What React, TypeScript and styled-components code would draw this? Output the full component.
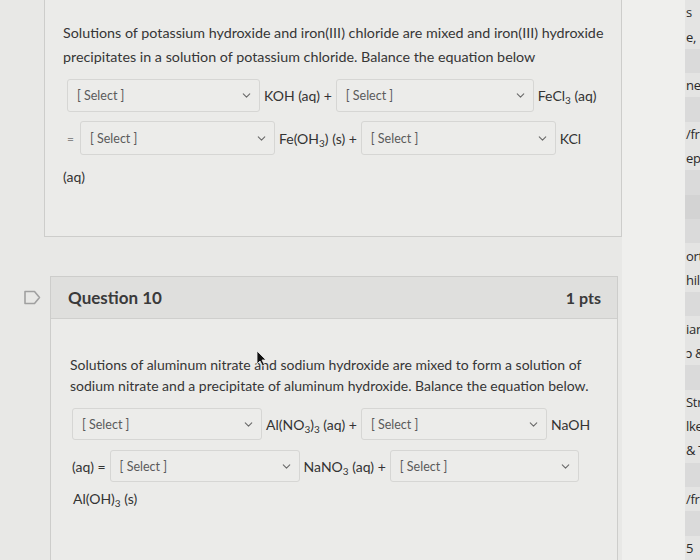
import React from "react";
import styled, { createGlobalStyle } from "styled-components";
import { ChevronDown } from "lucide-react";

const Global = createGlobalStyle`
  html, body { margin: 0; padding: 0; }
  body {
    background: #e8e8e6;
    font-family: Lato, "Noto Sans", "Liberation Sans", sans-serif;
    color: #383838;
    overflow: hidden;
  }
`;

const Page = styled.div`
  display: flex;
  width: 700px;
  height: 560px;
  overflow: hidden;
`;

const Main = styled.div`
  flex: 0 0 622px;
  display: flex;
  flex-direction: column;
  overflow: hidden;
`;

const Strip = styled.div`
  flex: 0 0 63px;
  background: #efefed;
`;

const Sidebar = styled.div`
  flex: 1;
  display: flex;
  flex-direction: column;
  background: #dedede;
  overflow: hidden;
`;

const SideItem = styled.div<{ $shade: number }>`
  height: 24.35px;
  flex: 0 0 24.35px;
  display: flex;
  align-items: center;
  padding-left: 1px;
  font-family: "Open Sans", Lato, sans-serif;
  font-size: 13px;
  letter-spacing: -0.3px;
  color: #2a2a2a;
  white-space: nowrap;
  background: ${(p) => (p.$shade === 0 ? "#e4e4e3" : p.$shade === 1 ? "#dadada" : "#d3d3d3")};
`;

const PrevCard = styled.div`
  flex: 0 0 237px;
  margin-left: 44px;
  width: 578px;
  box-sizing: border-box;
  border: 1px solid #cdcdcb;
  border-top: none;
  background: #ebebe9;
  padding: 21px 10px 0 18px;
`;

const Para = styled.p<{ $lh: number; $size: number }>`
  margin: 0;
  font-size: ${(p) => p.$size}px;
  line-height: ${(p) => p.$lh}px;
  color: #363636;
  white-space: nowrap;
`;

const EqRow = styled.div<{ $top: number; $indent: number }>`
  display: flex;
  align-items: center;
  gap: 4px;
  margin-top: ${(p) => p.$top}px;
  margin-left: ${(p) => p.$indent}px;
  font-size: 14px;
  color: #333;
  white-space: nowrap;
`;

const EqText = styled.span`
  font-size: 14px;
  color: #333;
  sub { font-size: 10px; vertical-align: -3px; line-height: 0; }
`;

const Equals = styled.span`
  font-size: 12px;
  color: #888;
  margin-right: 2px;
`;

const SelectBox = styled.div<{ $w: number; $h: number }>`
  box-sizing: border-box;
  width: ${(p) => p.$w}px;
  height: ${(p) => p.$h}px;
  display: flex;
  align-items: center;
  justify-content: space-between;
  padding: 0 6px 0 9px;
  background: #ececea;
  border: 1px solid #d6d6d4;
  border-radius: 3px;
  font-size: 12.5px;
  color: #5a5a5a;
  svg { color: #6a6a6a; }
`;

const Gap = styled.div<{ $h: number }>`
  flex: 0 0 ${(p) => p.$h}px;
`;

const QuestionBlock = styled.div`
  flex: 0 0 auto;
  display: flex;
`;

const FlagCol = styled.div`
  flex: 0 0 50px;
  box-sizing: border-box;
  padding: 13px 0 0 24px;
  color: #a0a0a0;
`;

const QCard = styled.div`
  flex: 0 0 568px;
  box-sizing: border-box;
  border: 1px solid #cdcdcb;
  background: #ebebe9;
  height: 300px;
`;

const QHeader = styled.div`
  height: 42px;
  box-sizing: border-box;
  display: flex;
  align-items: center;
  justify-content: space-between;
  padding: 0 16px 0 17px;
  background: #dfdfdd;
  border-bottom: 1px solid #cfcfcd;
  color: #3a3a3a;
`;

const QTitle = styled.h2`
  margin: 0;
  font-size: 17px;
  font-weight: 700;
`;

const Pts = styled.span`
  font-size: 16px;
  font-weight: 700;
`;

const QBody = styled.div`
  position: relative;
  padding: 36px 10px 0 19px;
`;

const Cursor = styled.svg`
  position: absolute;
  left: 205px;
  top: 31px;
`;

const Select = ({ w, h = 33 }: { w: number; h?: number }) => (
  <SelectBox $w={w} $h={h}>
    <span>[ Select ]</span>
    <ChevronDown size={13} strokeWidth={2} />
  </SelectBox>
);

const sideItems: [string, number][] = [
  ["s", 0], ["e,", 0], ["", 1], ["ne", 0], ["", 1], ["/fri", 0], ["eph", 0], ["", 1],
  ["", 2], ["", 1], ["ort", 0], ["hild", 0], ["", 1], ["ian", 0], ["\u0254 &", 0],
  ["", 1], ["Str", 0], ["lke", 0], ["& T", 0], ["", 1], ["/fri", 0], ["", 1], ["5", 0],
];

export default function App() {
  return (
    <Page>
      <Global />
      <Main>
        <PrevCard>
          <Para $lh={24} $size={14.3}>
            Solutions of potassium hydroxide and iron(III) chloride are mixed and iron(III) hydroxide
            <br />
            precipitates in a solution of potassium chloride. Balance the equation below
          </Para>
          <EqRow $top={10} $indent={4}>
            <Select w={193} />
            <EqText>KOH (aq) +</EqText>
            <Select w={198} />
            <EqText>FeCl<sub>3</sub> (aq)</EqText>
          </EqRow>
          <EqRow $top={9} $indent={4}>
            <Equals>=</Equals>
            <Select w={195} h={34} />
            <EqText>Fe(OH<sub>3</sub>) (s) +</EqText>
            <Select w={195} h={34} />
            <EqText>KCl</EqText>
          </EqRow>
          <EqRow $top={13} $indent={0}>
            <EqText>(aq)</EqText>
          </EqRow>
        </PrevCard>
        <Gap $h={39} />
        <QuestionBlock>
          <FlagCol>
            <svg width="17" height="15" viewBox="0 0 17 15" fill="none">
              <path d="M1 1.5 H10.5 L15.5 7.5 L10.5 13.5 H1 Z" stroke="currentColor" strokeWidth="1.6" strokeLinejoin="round" />
            </svg>
          </FlagCol>
          <QCard>
            <QHeader>
              <QTitle>Question 10</QTitle>
              <Pts>1 pts</Pts>
            </QHeader>
            <QBody>
              <Para $lh={20.5} $size={14}>
                Solutions of aluminum nitrate and sodium hydroxide are mixed to form a solution of
                <br />
                sodium nitrate and a precipitate of aluminum hydroxide. Balance the equation below.
              </Para>
              <EqRow $top={12} $indent={2}>
                <Select w={190} h={32} />
                <EqText>Al(NO<sub>3</sub>)<sub>3</sub> (aq) +</EqText>
                <Select w={186} h={32} />
                <EqText>NaOH</EqText>
              </EqRow>
              <EqRow $top={10} $indent={2}>
                <EqText>(aq) =</EqText>
                <Select w={190} h={32} />
                <EqText>NaNO<sub>3</sub> (aq) +</EqText>
                <Select w={189} h={32} />
              </EqRow>
              <EqRow $top={8} $indent={3}>
                <EqText>Al(OH)<sub>3</sub> (s)</EqText>
              </EqRow>
              <Cursor width="11" height="17" viewBox="0 0 11 17">
                <path d="M1 1 L1 14 L4 11 L6.5 16 L8.5 15 L6 10 L10 10 Z" fill="#111" stroke="#eee" strokeWidth="0.8" />
              </Cursor>
            </QBody>
          </QCard>
        </QuestionBlock>
      </Main>
      <Strip />
      <Sidebar>
        {sideItems.map(([t, s], i) => (
          <SideItem key={i} $shade={s}>{t}</SideItem>
        ))}
      </Sidebar>
    </Page>
  );
}
